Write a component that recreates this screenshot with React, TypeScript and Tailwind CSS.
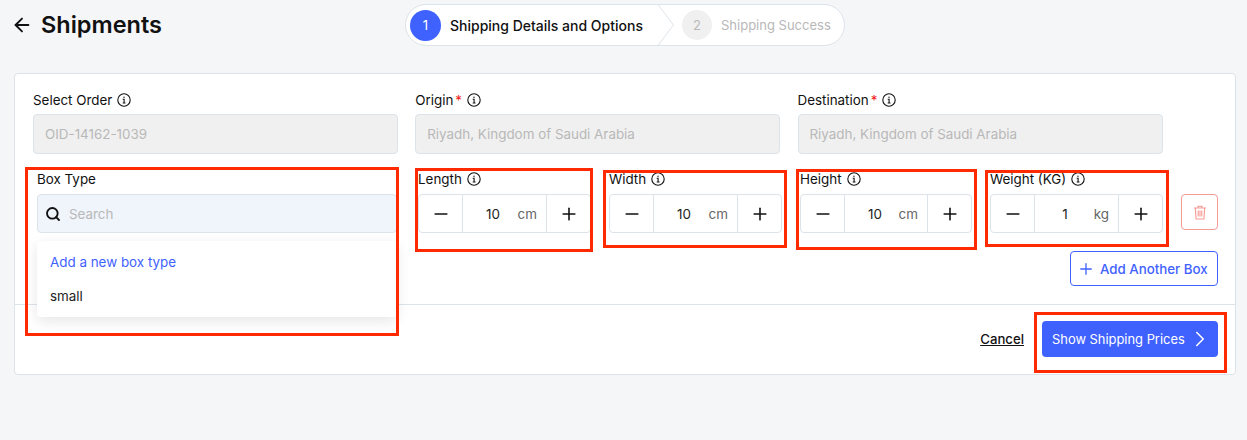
import { ArrowLeft, ChevronRight, Minus, Plus, Search } from "lucide-react";

function InfoIcon() {
	return (
		<svg width="14" height="14" viewBox="0 0 14 14" fill="none" stroke="#111" strokeWidth="1.1" className="shrink-0">
			<circle cx="7" cy="7" r="6.2" />
			<path d="M5.7 6.3H7.1V10M5.7 10H8.5" />
			<circle cx="7" cy="4.2" r="0.7" fill="#111" stroke="none" />
		</svg>
	);
}

function TrashIcon() {
	return (
		<svg width="14" height="15" viewBox="0 0 14 15" fill="none" stroke="#f79a94" strokeWidth="1.1">
			<path d="M1 3H13M5 3V1.2H9V3M2.4 3L3 14H11L11.6 3" />
			<path d="M5.2 5.5V11.5M7 5.5V11.5M8.8 5.5V11.5" />
		</svg>
	);
}

function TextField({ label, value, required }: { label: string; value: string; required?: boolean }) {
	return (
		<div className="w-[365px]">
			<div className="flex h-5 items-center gap-[5px] text-[13.4px] text-[#111]">
				<span>
					{label}
					{required && <span className="ml-0.5 text-[#f02020]">*</span>}
				</span>
				<InfoIcon />
			</div>
			<div className="mt-1 flex h-10 items-center rounded border border-[#dde3ea] bg-[#f0f0f0] px-[11px] text-[13.4px] text-[#b8b8b8]">
				{value}
			</div>
		</div>
	);
}

function Stepper({ label, value, unit, width }: { label: string; value: string; unit: string; width: string }) {
	return (
		<div className={width}>
			<div className="flex h-5 items-center gap-[5px] text-[13.4px] text-[#111]">
				<span>{label}</span>
				<InfoIcon />
			</div>
			<div className="mt-[5px] flex h-[39px] items-center rounded border border-[#dde3ea] bg-white">
				<div className="flex h-full w-[44px] shrink-0 items-center justify-center border-r border-[#dde3ea]">
					<Minus size={20} color="#111" strokeWidth={1.9} />
				</div>
				<div className="flex h-full min-w-0 flex-1 items-center pt-[2px] text-[13.4px]">
					<span className="ml-[10px] w-[40px] text-center text-[#222]">{value}</span>
					<span className="ml-auto pr-[9px] text-[#666]">{unit}</span>
				</div>
				<div className="flex h-full w-[44px] shrink-0 items-center justify-center border-l border-[#dde3ea]">
					<Plus size={20} color="#111" strokeWidth={1.9} />
				</div>
			</div>
		</div>
	);
}

const marks = [
	"left-[25px] top-[167px] h-[169px] w-[374px]",
	"left-[415px] top-[168px] h-[84px] w-[178px]",
	"left-[603px] top-[170px] h-[78px] w-[184px]",
	"left-[796px] top-[169px] h-[81px] w-[181px]",
	"left-[985px] top-[170px] h-[77px] w-[184px]",
	"left-[1034px] top-[312px] h-[61px] w-[193px]",
];

export default function App() {
	return (
		<div className="relative h-[440px] w-[1247px] overflow-hidden bg-[#f5f6f8] font-['Inter',sans-serif]">
			<div className="relative h-[73px]">
				<div className="flex items-center gap-2 pl-[11px] pt-[9px]">
					<ArrowLeft size={22} color="#111" strokeWidth={2} />
					<h1 className="text-[23.5px] leading-8 font-semibold text-[#111]">Shipments</h1>
				</div>
				<div className="absolute left-[405px] top-[4px] flex h-[42px] w-[440px] items-center overflow-hidden rounded-full border border-[#dde3ea] bg-white pl-[4px]">
					<span className="flex h-[31px] w-[31px] items-center justify-center rounded-full bg-[#3f62ff] pt-[2px] text-[13px] text-white">1</span>
					<span className="ml-[9px] w-[192px] text-[14px] font-medium whitespace-nowrap text-[#111]">Shipping Details and Options</span>
					<svg width="18" height="42" viewBox="0 0 18 42" fill="none" stroke="#dde3ea" className="ml-[15px] shrink-0">
						<path d="M0.5 0L16.5 21L0.5 42" />
					</svg>
					<span className="ml-[7px] flex h-[30px] w-[30px] items-center justify-center rounded-full bg-[#f0f0f0] pt-[2px] text-[13px] text-[#b8b8b8]">2</span>
					<span className="ml-[9px] pt-[2px] text-[13px] whitespace-nowrap text-[#b8b8b8]">Shipping Success</span>
				</div>
			</div>

			<div className="relative ml-[14px] h-[302px] w-[1222px] rounded border border-[#dde3ea] bg-white">
				<div className="flex gap-[17.25px] px-[18px] pt-[16px]">
					<TextField label="Select Order" value="OID-14162-1039" />
					<TextField label="Origin" value="Riyadh, Kingdom of Saudi Arabia" required />
					<TextField label="Destination" value="Riyadh, Kingdom of Saudi Arabia" required />
				</div>

				<div className="mt-[15px] flex pl-[22px]">
					<div className="w-[360px]">
						<div className="flex h-5 items-center text-[13.4px] text-[#111]">Box Type</div>
						<div className="mt-[5px] flex h-[39px] items-center gap-[8px] rounded border border-[#dde3ea] bg-[#f0f4fb] px-[7px] text-[13.4px] text-[#b8b8b8]">
							<Search size={16} color="#111" strokeWidth={2.8} />
							<span className="pt-[2px]">Search</span>
						</div>
					</div>
					<div className="ml-[21px] flex gap-[18px]">
						<Stepper label="Length" value="10" unit="cm" width="w-[173px]" />
						<Stepper label="Width" value="10" unit="cm" width="w-[173px]" />
						<Stepper label="Height" value="10" unit="cm" width="w-[172px]" />
						<Stepper label="Weight (KG)" value="1" unit="kg" width="w-[173px]" />
					</div>
					<div className="ml-[18px] mt-[25px] flex h-[36px] w-[37px] items-center justify-center rounded border border-[#f79a94]">
						<TrashIcon />
					</div>
				</div>

				<div className="mt-[18px] flex justify-end pr-[17px]">
					<button className="flex h-[35px] w-[148px] items-center gap-[5px] rounded border border-[#3f62ff] pl-[6px] text-[13.3px] font-medium text-[#3f62ff]">
						<Plus size={18} strokeWidth={1.75} />
						<span className="pt-[2px]">Add Another Box</span>
					</button>
				</div>

				<div className="mt-[18px] flex items-center justify-end gap-[18px] border-t border-[#dde3ea] pr-[17px] pt-[16px]">
					<span className="pt-[2px] text-[13.2px] font-medium text-[#111] underline">Cancel</span>
					<button className="flex h-[36px] w-[176px] items-center justify-between rounded bg-[#3f62ff] pl-[10px] pr-[5px] text-[12.9px] whitespace-nowrap text-white">
						<span className="pt-[2px]">Show Shipping Prices</span>
						<ChevronRight size={26} strokeWidth={1.4} />
					</button>
				</div>

				{/* open dropdown sits over the divider */}
				<div className="absolute left-[22px] top-[167px] w-[360px] rounded bg-white py-[4px] text-[13.4px] shadow-[0_4px_14px_rgba(0,0,0,0.1)]">
					<div className="flex h-[34px] items-center px-[13px] text-[#3f62ff]">Add a new box type</div>
					<div className="flex h-[34px] items-center px-[13px] text-[#222]">small</div>
				</div>
			</div>

			{marks.map((m) => (
				<div key={m} className={`absolute border-[3px] border-[#ff2a00] ${m}`} />
			))}
		</div>
	);
}
